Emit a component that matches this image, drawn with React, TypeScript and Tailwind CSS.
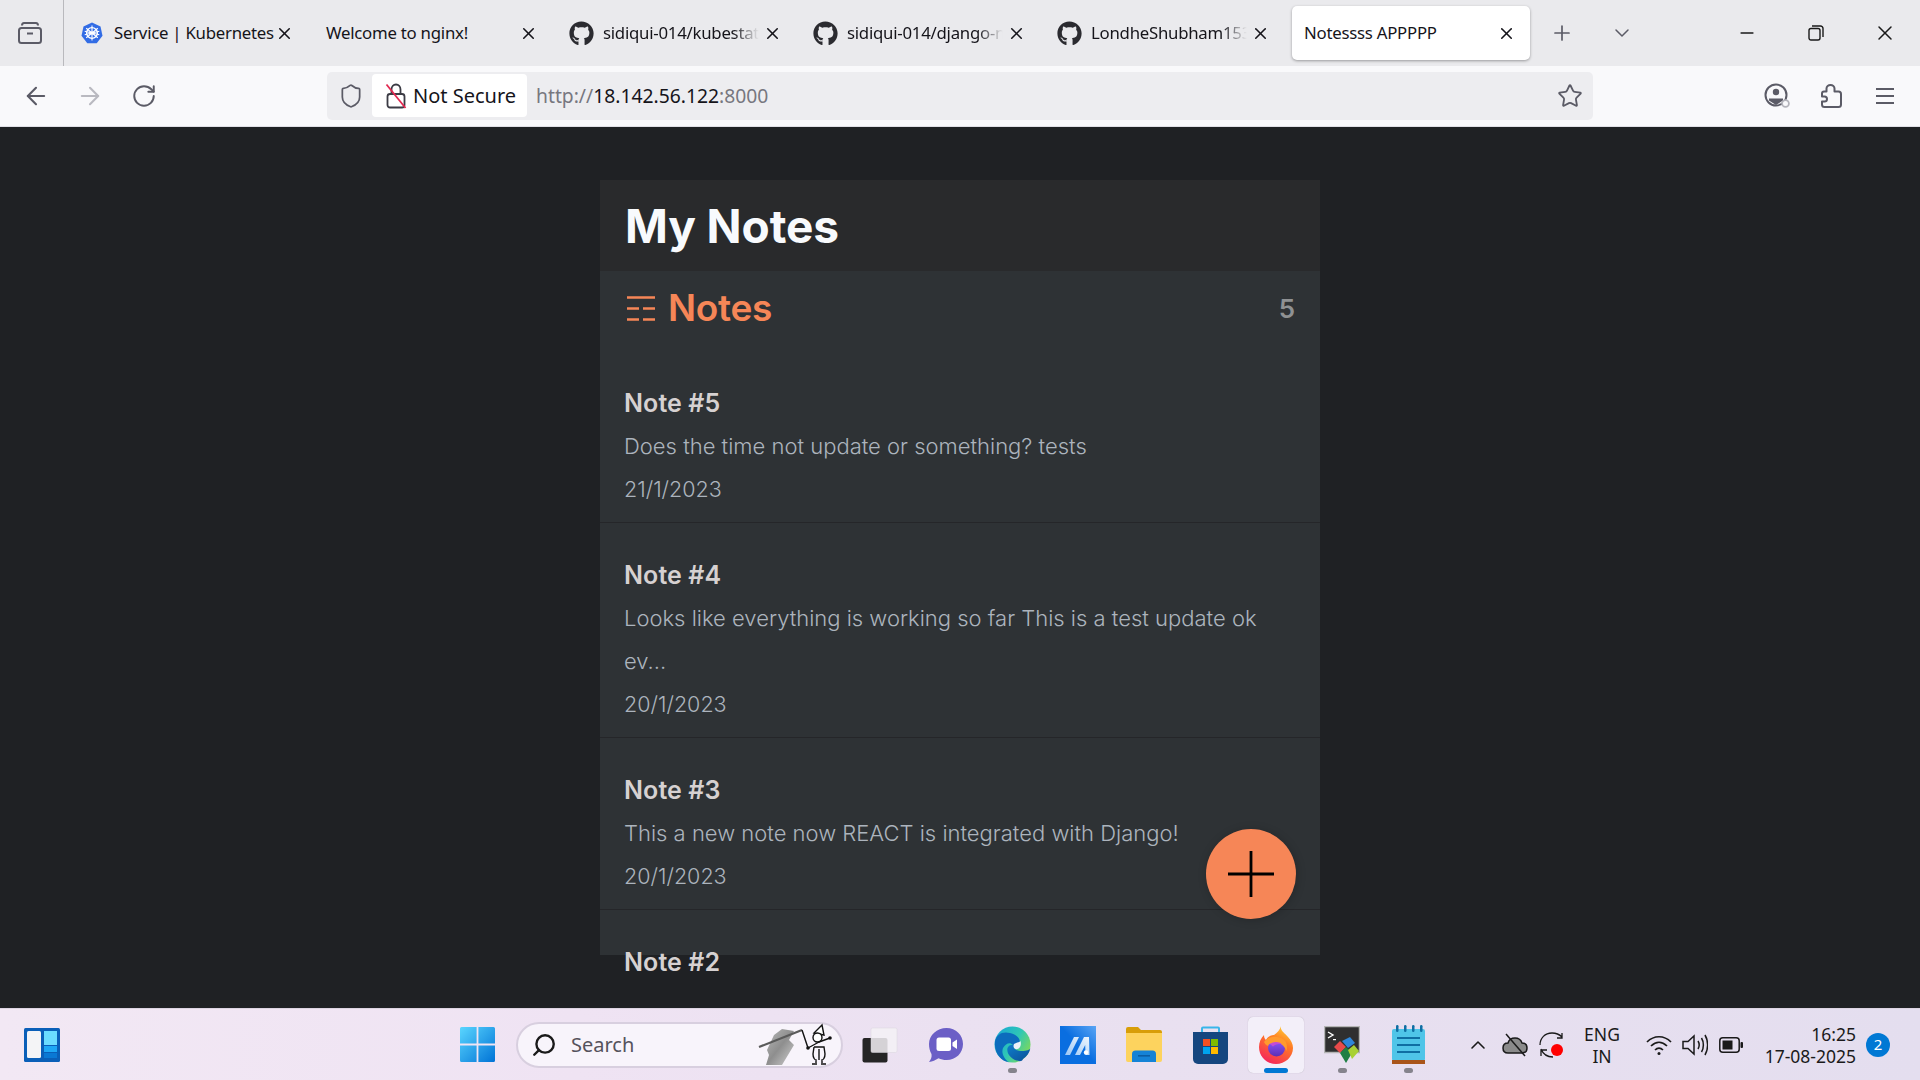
import {
  ArrowLeft,
  ArrowRight,
  ChevronDown,
  ChevronUp,
  Minus,
  Plus,
  RotateCw,
  Search,
  Shield,
  Star,
  X,
} from "lucide-react";
import { FaGithub } from "react-icons/fa";
import type { ReactNode } from "react";

const NOTES = [
  { title: "Note #5", lines: ["Does the time not update or something? tests"], date: "21/1/2023" },
  {
    title: "Note #4",
    lines: ["Looks like everything is working so far This is a test update ok", "ev..."],
    date: "20/1/2023",
  },
  { title: "Note #3", lines: ["This a new note now REACT is integrated with Django!"], date: "20/1/2023" },
  { title: "Note #2", lines: ["This one is still further down the list"], date: "20/1/2023" },
];

const TABS = [
  { title: "Service | Kubernetes", icon: "k8s", fade: false },
  { title: "Welcome to nginx!", icon: "", fade: false },
  { title: "sidiqui-014/kubestatus", icon: "gh", fade: true },
  { title: "sidiqui-014/django-notes-app", icon: "gh", fade: true },
  { title: "LondheShubham153/django", icon: "gh", fade: true },
];

function KubeIcon() {
  return (
    <svg width="22" height="22" viewBox="0 0 22 22">
      <path d="M11 0.5 19.5 4.6 21.5 13.8 15.7 21.2H6.3L0.5 13.8 2.5 4.6Z" fill="#326ce5" />
      <circle cx="11" cy="11" r="5.4" fill="none" stroke="#fff" strokeWidth="1.4" />
      <path
        d="M11 3.5V18.5M3.7 9.3 18.3 12.7M5.2 15.7 16.8 6.3M5.2 6.3 16.8 15.7M3.7 12.7 18.3 9.3"
        stroke="#fff"
        strokeWidth="1.1"
      />
      <circle cx="11" cy="11" r="1.6" fill="#fff" />
    </svg>
  );
}

function Tab({ title, icon, fade }: { title: string; icon: string; fade: boolean }) {
  return (
    <div className="flex h-[54px] w-[238px] shrink-0 items-center pl-[9px] pr-[16px]">
      {icon === "k8s" ? (
        <span className="mr-[11px] shrink-0">
          <KubeIcon />
        </span>
      ) : null}
      {icon === "gh" ? <FaGithub size={25} className="mr-[9px] shrink-0 text-[#2b2b30]" /> : null}
      <span
        className={`min-w-0 flex-1 overflow-hidden whitespace-nowrap text-[16.8px] tracking-[-0.25px] text-[#15141a] ${
          fade ? "[mask-image:linear-gradient(to_right,black_82%,transparent_98%)]" : ""
        } ${icon === "" ? "pl-[1px]" : ""}`}
      >
        {title}
      </span>
      <X size={19} strokeWidth={2} className="ml-[1px] shrink-0 text-[#15141a]" />
    </div>
  );
}

function ArchiveIcon() {
  return (
    <svg width="24" height="24" viewBox="0 0 24 24" fill="none" stroke="#5b5b66" strokeWidth="2">
      <rect x="1" y="7" width="22" height="15" rx="2.5" />
      <path d="M4 4.5C4 2.8 5 2 6 2H18C19 2 20 2.8 20 4.5" />
      <path d="M9 12.5H15" />
    </svg>
  );
}

function SlashedLock() {
  return (
    <svg width="22" height="26" viewBox="0 0 22 26" fill="none">
      <rect x="2.5" y="11" width="17" height="13.5" rx="2.5" stroke="#3b3b44" strokeWidth="1.8" />
      <path d="M6.5 11V6.5C6.5 3.5 8.5 1.5 11 1.5S15.5 3.5 15.5 6.5V11" stroke="#3b3b44" strokeWidth="1.8" />
      <path d="M1.5 1.5 20.5 25" stroke="#e22850" strokeWidth="1.8" />
    </svg>
  );
}

function ProfileIcon() {
  return (
    <svg width="26" height="26" viewBox="0 0 26 26" fill="none">
      <circle cx="12" cy="12" r="10.5" stroke="#5b5b66" strokeWidth="2" />
      <circle cx="12" cy="9" r="3.2" fill="#5b5b66" />
      <path d="M5 15.5H19V17.5L12 22 5 17.5Z" fill="#5b5b66" />
      <circle cx="21.5" cy="20.5" r="3.4" fill="#f9f9fb" stroke="#b4b4bb" strokeWidth="1.8" />
    </svg>
  );
}

function PuzzleIcon() {
  return (
    <svg width="21" height="24" viewBox="0 0 21 24" fill="none" stroke="#5b5b66" strokeWidth="2" strokeLinejoin="round">
      <path d="M5.5 7.5V4.5A4 3.5 0 0 1 13.5 4.5V7.5H17.5Q20 7.5 20 10V20.5Q20 23 17.5 23H3.5Q1 23 1 20.5V17.5H3.5A2.5 2.5 0 0 0 3.5 12.5H1V9.5Q1 7.5 3 7.5Z" />
    </svg>
  );
}

function HamburgerIcon() {
  return (
    <svg width="18" height="16" viewBox="0 0 18 16" stroke="#5b5b66" strokeWidth="1.8">
      <path d="M0 1H18M0 8H18M0 15H18" />
    </svg>
  );
}

function NotesListIcon() {
  return (
    <svg width="28" height="25" viewBox="0 0 28 25" stroke="#f68657" strokeWidth="2.6">
      <path d="M0 1.5H28M0 12.5H12M16 12.5H28M0 23.5H12M16 23.5H28" />
    </svg>
  );
}

function NoteRow({ title, lines, date }: { title: string; lines: string[]; date: string }) {
  return (
    <div className="border-b border-[#252629] pb-[11px] pl-[24px] pr-[24px] pt-[31px] leading-[43px]">
      <h3 className="text-[25px] font-semibold tracking-[0.1px] text-[#d6d1d1]">{title}</h3>
      {lines.map((line) => (
        <p key={line} className="whitespace-nowrap text-[22px] font-light text-[#acb4bd]">
          {line}
        </p>
      ))}
      <p className="text-[21.5px] font-light text-[#acb4bd]">{date}</p>
    </div>
  );
}

function WidgetsIcon() {
  return (
    <svg width="36" height="34" viewBox="0 0 36 34">
      <rect width="36" height="34" rx="1.5" fill="#0a5fb8" />
      <rect x="3" y="3" width="14" height="27" rx="1.5" fill="#f4f4f6" />
      <rect x="20" y="3" width="13" height="14" fill="#6bdcff" />
      <rect x="20" y="18" width="13" height="6" fill="#1ea7f5" />
      <rect x="20" y="25" width="13" height="5" fill="#0a78d4" />
    </svg>
  );
}

function StartIcon() {
  return (
    <svg width="35" height="35" viewBox="0 0 35 35">
      <defs>
        <linearGradient id="startFill" x1="0" y1="0" x2="1" y2="1">
          <stop offset="0" stopColor="#5ad6ff" />
          <stop offset="1" stopColor="#0073d6" />
        </linearGradient>
      </defs>
      <path d="M0 1.5A1.5 1.5 0 0 1 1.5 0H16.6V16.6H0ZM18.4 0H33.5A1.5 1.5 0 0 1 35 1.5V16.6H18.4ZM0 18.4H16.6V35H1.5A1.5 1.5 0 0 1 0 33.5ZM18.4 18.4H35V33.5A1.5 1.5 0 0 1 33.5 35H18.4Z" fill="url(#startFill)" />
    </svg>
  );
}

function SearchDoodle() {
  return (
    <svg width="78" height="44" viewBox="0 0 78 44" fill="none" className="mr-[6px]">
      <defs>
        <linearGradient id="handFill" x1="0" y1="0" x2="1" y2="1">
          <stop offset="0" stopColor="#b9b9b9" />
          <stop offset="0.5" stopColor="#8e8e8e" />
          <stop offset="1" stopColor="#d0d0d0" />
        </linearGradient>
      </defs>
      <path d="M10 27 17 12 25 6 37 8 32 17 37 22 25 42H9L12 32Z" fill="url(#handFill)" />
      <path d="M2 24 45 7" stroke="#5a5a5a" strokeWidth="2.2" />
      <g stroke="#111" strokeWidth="1.4">
        <path d="M45 7 51 25" />
        <path d="M65 2 57 10 67 12Z" fill="#fff" />
        <circle cx="60.5" cy="14.5" r="4.5" fill="#fff" />
        <path d="M62 19 51 25M62 19 73 15" />
        <path d="M57 24H67L68 31C68 35 66 37 65 37V40M57 24 56 31C56 35 58 37 59 37V40M62 26V37" />
        <path d="M55 41H60M64 41H69" />
      </g>
      <circle cx="51" cy="25" r="1.8" fill="#111" />
      <circle cx="73" cy="15" r="1.8" fill="#111" />
    </svg>
  );
}

function TaskViewIcon() {
  return (
    <svg width="36" height="36" viewBox="0 0 36 36">
      <rect x="0.5" y="11" width="25" height="24.5" rx="2" fill="#252525" />
      <rect x="9" y="1" width="26" height="24.5" rx="1.5" fill="#f4f1f6" fillOpacity="0.85" stroke="#d8d4dc" strokeWidth="0.5" />
    </svg>
  );
}

function TeamsIcon() {
  return (
    <svg width="36" height="36" viewBox="0 0 36 36">
      <path d="M18.5 1C28 1 35 8 35 17S28 33 18.5 33C15.5 33 13 32.4 10.5 31.2 7.5 33 4.5 34.5 1 35 3 32.5 4 30 3.5 27 1.8 24 1 20.8 1 17 1 8 9 1 18.5 1Z" fill="#6b5fc6" />
      <rect x="8.5" y="10.5" width="14.5" height="13.5" rx="2.5" fill="#fff" />
      <path d="M24.5 15.5 29 12.5V22L24.5 19Z" fill="#fff" />
    </svg>
  );
}

function EdgeIcon() {
  return (
    <svg width="37" height="37" viewBox="0 0 37 37">
      <defs>
        <linearGradient id="edgeTop" x1="0" y1="0" x2="1" y2="0.6">
          <stop offset="0" stopColor="#16a4d8" />
          <stop offset="0.6" stopColor="#2fc7b5" />
          <stop offset="1" stopColor="#7ad860" />
        </linearGradient>
        <linearGradient id="edgeLow" x1="0" y1="0" x2="1" y2="1">
          <stop offset="0" stopColor="#0f7ecb" />
          <stop offset="1" stopColor="#0b4f96" />
        </linearGradient>
      </defs>
      <circle cx="18.5" cy="18.5" r="18" fill="url(#edgeTop)" />
      <path d="M36.5 22C36 24 31 25.5 26 25 21 24.5 19.5 22 20.5 19 18 18 14.5 19 13.5 22 12.5 26 15 31 21 34 25 35.5 28 36 29 33 33 30.5 35.5 26.5 36.5 22Z" fill="url(#edgeLow)" />
      <path d="M1 16C2 8 9 5 16 7 24 9 27 14 25.5 18 24 21 20 21 19 19 16 16 12 17 9 22 7 27 10 33 15 36.3 7 35.5 0 27 1 16Z" fill="#0c6cbd" />
      <path d="M20 18C22.5 16.5 25 16.5 26.5 15 28 20 25 24 21.5 23 19.5 22.5 19 20 20 18Z" fill="#eaf2f8" />
    </svg>
  );
}

function MaIcon() {
  return (
    <svg width="36" height="38" viewBox="0 0 36 38">
      <defs>
        <linearGradient id="maFill" x1="1" y1="0" x2="0" y2="1">
          <stop offset="0" stopColor="#5aa5f5" />
          <stop offset="0.5" stopColor="#0a6ee0" />
          <stop offset="1" stopColor="#0a6ee0" />
        </linearGradient>
        <linearGradient id="maMark" x1="0" y1="1" x2="1" y2="0">
          <stop offset="0" stopColor="#9cc7f5" />
          <stop offset="1" stopColor="#eef6fe" />
        </linearGradient>
      </defs>
      <rect width="36" height="38" fill="url(#maFill)" />
      <path d="M5 29 14 11H19L10 29ZM15 29 24 11H29L29.5 29H25.5L25.2 19 20 29Z" fill="url(#maMark)" />
      <circle cx="26" cy="26.5" r="2.2" fill="#fff" />
    </svg>
  );
}

function FolderIcon() {
  return (
    <svg width="36" height="35" viewBox="0 0 36 35">
      <path d="M0 2A2 2 0 0 1 2 0H12L15 3H34A2 2 0 0 1 36 5V12H0Z" fill="#d89e08" />
      <path d="M0 6H36V33A2 2 0 0 1 34 35H2A2 2 0 0 1 0 33Z" fill="#fdd35e" />
      <path d="M6 35V27A3.5 3.5 0 0 1 9.5 23.5H26.5A3.5 3.5 0 0 1 30 27V35Z" fill="#1583d6" />
      <rect x="12" y="28" width="12" height="1.6" fill="#0b5da3" />
    </svg>
  );
}

function StoreIcon() {
  return (
    <svg width="35" height="38" viewBox="0 0 35 38">
      <path d="M9 8V2.5A1 1 0 0 1 10 1.5H25A1 1 0 0 1 26 2.5V8" fill="none" stroke="#38b6ea" strokeWidth="2" />
      <path d="M0 6H35V33A5 5 0 0 1 30 38H5A5 5 0 0 1 0 33Z" fill="#15467f" />
      <rect x="10" y="13" width="7" height="7" fill="#f25022" />
      <rect x="18" y="13" width="7" height="7" fill="#7fba00" />
      <rect x="10" y="21" width="7" height="7" fill="#00a4ef" />
      <rect x="18" y="21" width="7" height="7" fill="#ffb900" />
    </svg>
  );
}

function FirefoxIcon() {
  return (
    <svg width="34" height="38" viewBox="0 0 34 38">
      <defs>
        <linearGradient id="foxBody" x1="0.8" y1="0" x2="0.3" y2="1">
          <stop offset="0" stopColor="#ffd43a" />
          <stop offset="0.4" stopColor="#ff7b24" />
          <stop offset="1" stopColor="#f5255c" />
        </linearGradient>
        <linearGradient id="foxCore" x1="0.5" y1="0" x2="0.5" y2="1">
          <stop offset="0" stopColor="#9059ff" />
          <stop offset="1" stopColor="#5b2fb5" />
        </linearGradient>
      </defs>
      <path d="M22 0C21 5 26 7 29 11 32 14 34 18 34 22 34 31 26 38 17 38S0 31 0 21C0 16 2 12 5 9 5 12 6 13 7 14 9 10 13 9 15 9 18 7 21 4 22 0Z" fill="url(#foxBody)" />
      <circle cx="17.5" cy="22" r="8.5" fill="url(#foxCore)" />
      <path d="M5 16C10 9 19 10 24 13 28 16 28.5 20 27.5 25 25.5 19 20 15.5 15 17 12 18 10 17 9 20 7 19 6 18 5 16Z" fill="#ff9a2e" />
      <path d="M11 18C14 15.5 20 15 23 18.5 19 17.5 16 18.5 14 20.5Z" fill="#c44bd6" />
    </svg>
  );
}

function TerminalIcon() {
  return (
    <svg width="36" height="38" viewBox="0 0 36 38">
      <rect x="0.5" y="0.5" width="35" height="26" fill="#2f2f2f" stroke="#b5b5b5" strokeWidth="1.5" />
      <path d="M4 6 9 9 4 12" fill="none" stroke="#fff" strokeWidth="1.4" />
      <rect x="9" y="13" width="3" height="1.2" fill="#fff" />
      <path d="M10 21 16 15 22 21 16 27Z" fill="#e84a4a" />
      <path d="M18 15 26 11 31 17 24 22Z" fill="#2e86d9" />
      <path d="M16 27 22 21 28 27 22 37Z" fill="#1f7f44" />
      <path d="M24 24 30 19 35 25 28 33Z" fill="#a9d134" />
    </svg>
  );
}

function NotepadIcon() {
  return (
    <svg width="33" height="39" viewBox="0 0 33 39">
      <rect x="0" y="4" width="33" height="32" rx="2" fill="#4fc5e8" />
      <rect x="0" y="35" width="33" height="4" fill="#a9551a" />
      <g fill="#0f6fa3">
        <rect x="4" y="0" width="2.5" height="7" rx="1.2" />
        <rect x="12" y="0" width="2.5" height="7" rx="1.2" />
        <rect x="20" y="0" width="2.5" height="7" rx="1.2" />
        <rect x="28" y="0" width="2.5" height="7" rx="1.2" />
        <rect x="5" y="12" width="23" height="2" />
        <rect x="5" y="19" width="23" height="2" />
        <rect x="5" y="26" width="23" height="2" />
      </g>
    </svg>
  );
}

function TaskbarSlot({ children, dot, active }: { children: ReactNode; dot?: boolean; active?: boolean }) {
  return (
    <div className="relative flex h-[56px] w-[66px] shrink-0 items-center justify-center">
      {active ? (
        <div className="absolute left-[5px] top-0 h-[56px] w-[56px] rounded-[5px] bg-[#f3eff9] shadow-[0_0_1px_rgba(0,0,0,0.25)]" />
      ) : null}
      <div className="relative">{children}</div>
      {dot ? <div className="absolute bottom-0 left-[29px] h-[5px] w-[9px] rounded-full bg-[#85838c]" /> : null}
      {active ? <div className="absolute bottom-0 left-[21px] h-[5px] w-[24px] rounded-full bg-[#0078d4]" /> : null}
    </div>
  );
}

function TrayIcons() {
  return (
    <div className="flex items-center">
      <ChevronUp size={24} strokeWidth={1.6} className="mr-[12px] text-[#1a1a1a]" />
      <svg width="26" height="24" viewBox="0 0 26 24" fill="none" className="mr-[10px]">
        <path d="M6 20C3 20 1 18 1 15S3 10 6 10C7 6 10 5 13 5 16 5 19 7 20 10 23 10 25 12 25 15S23 20 20 20Z" fill="#8a8a8a" stroke="#1a1a1a" strokeWidth="1.5" />
        <path d="M4 1 23 23" stroke="#1a1a1a" strokeWidth="1.5" />
      </svg>
      <svg width="26" height="26" viewBox="0 0 26 26" fill="none" className="ml-[1px]">
        <path d="M1 13C1 6 6 1 13 1 17 1 20 2 23 5M23 1V6H18" stroke="#1a1a1a" strokeWidth="1.3" />
        <path d="M2 17C4 22 8 25 14 25M2 24V18H8" stroke="#1a1a1a" strokeWidth="1.3" />
        <circle cx="18" cy="18" r="6" fill="#f00" />
      </svg>
    </div>
  );
}

function NetworkIcons() {
  return (
    <div className="flex items-center">
      <svg width="26" height="22" viewBox="0 0 26 22" fill="none" stroke="#1a1a1a" strokeWidth="1.7" className="mr-[10px]">
        <path d="M1 8C8 1 18 1 25 8M5 12C10 7 16 7 21 12M9 16C11.5 13.5 14.5 13.5 17 16" />
        <circle cx="13" cy="19.5" r="1.5" fill="#1a1a1a" stroke="none" />
      </svg>
      <svg width="26" height="24" viewBox="0 0 26 24" fill="none" stroke="#1a1a1a" strokeWidth="1.5" className="mr-[11px]">
        <path d="M1 8.5H6L12 3V21L6 15.5H1Z" />
        <path d="M16 8C17.5 10.5 17.5 13.5 16 16M19.5 5C22 9 22 15 19.5 19M23 2C26.5 8 26.5 16 23 22" />
      </svg>
      <svg width="24" height="16" viewBox="0 0 24 16" fill="none">
        <rect x="0.8" y="0.8" width="19.4" height="14.4" rx="3" stroke="#1a1a1a" strokeWidth="1.5" />
        <rect x="3.5" y="3.5" width="10" height="9" fill="#1a1a1a" />
        <rect x="21.5" y="5" width="2.5" height="6" rx="1" fill="#1a1a1a" />
      </svg>
    </div>
  );
}

export default function App() {
  return (
    <div className="flex h-screen w-full flex-col overflow-hidden bg-[#1f2124] font-['Inter',sans-serif]">
      {/* tab strip */}
      <div className="flex h-[66px] shrink-0 items-center bg-[#eaeaed] font-['Noto_Sans',sans-serif]">
        <div className="flex h-full w-[64px] shrink-0 items-center justify-center border-r border-[#b9b9bd] pr-[3px]">
          <ArchiveIcon />
        </div>
        <div className="ml-[8px] flex gap-[6px]">
          {TABS.map((tab) => (
            <Tab key={tab.title} {...tab} />
          ))}
          <div className="flex h-[54px] w-[238px] items-center rounded-[5px] bg-white pl-[12px] pr-[14px] shadow-[0_1px_3px_rgba(0,0,0,0.35)]">
            <span className="flex-1 whitespace-nowrap text-[16.8px] tracking-[-0.25px] text-[#15141a]">Notessss APPPPP</span>
            <X size={19} strokeWidth={2} className="text-[#15141a]" />
          </div>
        </div>
        <Plus size={24} strokeWidth={1.7} className="ml-[20px] text-[#5b5b66]" />
        <ChevronDown size={24} strokeWidth={1.5} className="ml-[36px] text-[#5b5b66]" />
        <Minus size={20} strokeWidth={2} className="ml-[103px] text-[#1a1a1a]" />
        <svg width="16" height="16" viewBox="0 0 16 16" fill="none" stroke="#1a1a1a" strokeWidth="1.4" className="ml-[51px]">
          <rect x="1" y="3.5" width="11" height="11.5" rx="2" />
          <path d="M4 1H12.5A2.5 2.5 0 0 1 15 3.5V12" />
        </svg>
        <X size={24} strokeWidth={1.5} className="ml-[49px] text-[#1a1a1a]" />
      </div>

      {/* toolbar */}
      <div className="flex h-[61px] shrink-0 items-center border-b border-[#e0e0e6] bg-[#f9f9fb] pb-px">
        <div className="flex w-[327px] shrink-0 items-center pl-[22px]">
          <ArrowLeft size={28} strokeWidth={1.8} className="text-[#5b5b66]" />
          <ArrowRight size={28} strokeWidth={1.8} className="ml-[26px] text-[#b9b9c0]" />
          <RotateCw size={26} strokeWidth={1.8} className="ml-[27px] text-[#5b5b66]" />
        </div>
        <div className="flex h-[48px] w-[1266px] shrink-0 items-center rounded-[5px] bg-[#ededf0] pr-[10px] font-['Noto_Sans',sans-serif]">
          <Shield size={26} strokeWidth={1.6} className="ml-[11px] text-[#5b5b66]" />
          <div className="ml-[8px] flex h-[43px] w-[155px] items-center rounded-[4px] bg-white pl-[13px]">
            <SlashedLock />
            <span className="ml-[6px] whitespace-nowrap text-[20px] text-[#15141a]">Not Secure</span>
          </div>
          <div className="ml-[9px] flex-1 whitespace-nowrap pt-[2px] text-[19.3px] text-[#77777f]">
            http://<span className="text-[#15141a]">18.142.56.122</span>:8000
          </div>
          <Star size={26} strokeWidth={1.7} className="text-[#5b5b66]" />
        </div>
        <div className="ml-[171px] flex items-center">
          <ProfileIcon />
          <span className="ml-[31px]">
            <PuzzleIcon />
          </span>
          <span className="ml-[34px]">
            <HamburgerIcon />
          </span>
        </div>
      </div>

      {/* page */}
      <main className="flex min-h-0 flex-1 justify-center pt-[53px]">
        <section className="relative h-[775px] w-[720px] bg-[#2e3235]">
          <header className="flex h-[91px] items-center bg-[#292a2c] pl-[25px] pt-[1px]">
            <h1 className="text-[46px] font-bold tracking-[-0.1px] text-[#f8fafd]">My Notes</h1>
          </header>
          <div className="flex h-[80px] items-start justify-between px-[25px] pt-[12px]">
            <h2 className="flex h-[50px] items-center text-[37px] font-semibold tracking-[-0.3px] text-[#f68657]">
              <span className="ml-[2px] mr-[13px]">
                <NotesListIcon />
              </span>
              Notes
            </h2>
            <span className="flex h-[50px] items-center text-[26px] font-semibold text-[#8f9193]">5</span>
          </div>
          <div className="h-[634px] overflow-hidden">
            {NOTES.map((note) => (
              <NoteRow key={note.title} {...note} />
            ))}
          </div>
          <button className="absolute bottom-[36px] right-[24px] flex h-[90px] w-[90px] items-center justify-center rounded-full bg-[#f68657] shadow-[1px_1px_10px_rgba(0,0,0,0.2)]">
            <svg width="46" height="46" viewBox="0 0 46 46" stroke="#000" strokeWidth="2.8">
              <path d="M23 0V46M0 23H46" />
            </svg>
          </button>
        </section>
      </main>

      {/* taskbar */}
      <footer className="flex h-[72px] shrink-0 items-center border-t border-[#dcd4e2] bg-[linear-gradient(90deg,#f2e8f4,#efe3f3_30%,#e9e0f0_60%,#e4deef)] font-['Noto_Sans',sans-serif]">
        <div className="ml-[24px]">
          <WidgetsIcon />
        </div>
        <div className="ml-[400px]">
          <StartIcon />
        </div>
        <div className="ml-[21px] flex h-[46px] w-[327px] shrink-0 items-center rounded-full border-2 border-[#d8cfdf] bg-[#f8f4fb] pl-[13px]">
          <Search size={26} strokeWidth={2.2} className="-scale-x-100 text-[#1a1a1a]" />
          <span className="ml-[14px] flex-1 text-[20px] text-[#55525c]">Search</span>
          <SearchDoodle />
        </div>
        <div className="ml-[4px] flex">
          <TaskbarSlot><TaskViewIcon /></TaskbarSlot>
          <TaskbarSlot><TeamsIcon /></TaskbarSlot>
          <TaskbarSlot dot><EdgeIcon /></TaskbarSlot>
          <TaskbarSlot><MaIcon /></TaskbarSlot>
          <TaskbarSlot><FolderIcon /></TaskbarSlot>
          <TaskbarSlot><StoreIcon /></TaskbarSlot>
          <TaskbarSlot active><FirefoxIcon /></TaskbarSlot>
          <TaskbarSlot dot><TerminalIcon /></TaskbarSlot>
          <TaskbarSlot dot><NotepadIcon /></TaskbarSlot>
        </div>
        <div className="ml-[25px]">
          <TrayIcons />
        </div>
        <div className="ml-[17px] w-[40px] text-center text-[17.5px] leading-[22px] text-[#1a1a1a]">
          ENG
          <br />
          IN
        </div>
        <div className="ml-[24px]">
          <NetworkIcons />
        </div>
        <div className="ml-[13px] w-[100px] text-right text-[17.5px] leading-[22px] text-[#1a1a1a]">
          16:25
          <br />
          <span className="whitespace-nowrap">17-08-2025</span>
        </div>
        <div className="ml-[10px] flex h-[24px] w-[24px] items-center justify-center rounded-full bg-[#0078d4] text-[15px] text-white">
          2
        </div>
      </footer>
    </div>
  );
}
